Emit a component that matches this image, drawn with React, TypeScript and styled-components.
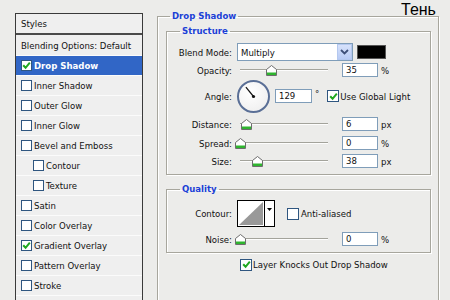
import React from 'react';
import styled, { createGlobalStyle } from 'styled-components';

const GlobalStyle = createGlobalStyle`
  html, body {
    margin: 0;
    padding: 0;
    width: 450px;
    height: 300px;
    overflow: hidden;
    background: #ececea;
    font-family: "DejaVu Sans Condensed", "Liberation Sans", sans-serif;
    font-size: 9.5px;
    color: #111;
  }
`;

const Page = styled.div`
  position: relative;
  display: flex;
  width: 450px;
  height: 300px;
  overflow: hidden;
`;

const Caption = styled.div`
  position: absolute;
  top: 1px;
  left: 401px;
  font-family: "Liberation Sans", Arial, sans-serif;
  font-size: 16px;
  line-height: 18px;
  color: #000;
`;

// ---- left list ----

const LeftPane = styled.div`
  padding: 13px 0 0 15px;
  flex: none;
`;

const StylesList = styled.div`
  width: 128px;
  height: 300px;
  box-sizing: border-box;
  border: 1px solid #3a3a3a;
  border-bottom: none;
  background: #efefef;
`;

const ListHeader = styled.div`
  height: 19px;
  display: flex;
  align-items: center;
  padding-left: 5px;
  border-bottom: 2px solid #4a4a4a;
`;

const ListItem = styled.div<{ $selected?: boolean; $indent?: boolean; $tall?: boolean }>`
  height: ${(p) => (p.$tall ? 20 : 19)}px;
  display: flex;
  align-items: center;
  gap: 2px;
  padding-left: ${(p) => (p.$indent ? 17 : 5)}px;
  border-bottom: 1px solid #fbfbfb;
  background: ${(p) => (p.$selected ? '#3166c6' : 'transparent')};
  color: ${(p) => (p.$selected ? '#fff' : '#111')};
  font-weight: ${(p) => (p.$selected ? 'bold' : 'normal')};
`;

const Box = styled.span<{ $size?: number }>`
  flex: none;
  display: inline-flex;
  align-items: center;
  justify-content: center;
  width: ${(p) => p.$size ?? 11}px;
  height: ${(p) => p.$size ?? 11}px;
  box-sizing: border-box;
  border: 1px solid #2f5680;
  background: #fff;
`;

const Check = ({ checked, size }: { checked?: boolean; size?: number }) => (
  <Box $size={size}>
    {checked && (
      <svg width="9" height="9" viewBox="0 0 9 9">
        <path d="M1.2 4.2 L3.6 6.8 L7.8 1.6" fill="none" stroke="#1fa81f" strokeWidth="2" />
      </svg>
    )}
  </Box>
);

// ---- right panel ----

const RightPane = styled.div`
  margin-left: 14px;
  padding-top: 10px;
  flex: none;
`;

const GroupBox = styled.fieldset<{ $pad?: string; $height?: number }>`
  margin: 0;
  min-width: 0;
  padding: ${(p) => p.$pad ?? '0'};
  border: 1px solid #a7a69d;
  box-shadow: 1px 1px 0 #fff, inset 1px 1px 0 #fff;
  ${(p) => (p.$height ? `height: ${p.$height}px;` : '')}
  box-sizing: border-box;
`;

const Legend = styled.legend<{ $offset: number }>`
  margin-left: ${(p) => p.$offset}px;
  padding: 0 2px;
  line-height: 12px;
  font-weight: bold;
  color: #1b3fd6;
  font-size: 9.5px;
`;

const Row = styled.div<{ $h: number; $mt: number }>`
  display: flex;
  align-items: center;
  gap: 5px;
  height: ${(p) => p.$h}px;
  margin-top: ${(p) => p.$mt}px;
`;

const Label = styled.span`
  width: 65px;
  flex: none;
  text-align: right;
  white-space: nowrap;
`;

const Select = styled.div`
  width: 116px;
  height: 18px;
  box-sizing: border-box;
  border: 1px solid #7f9db9;
  background: #fff;
  display: flex;
  align-items: center;
  justify-content: space-between;
  padding-left: 3px;
`;

const SelectButton = styled.span`
  width: 15px;
  height: 16px;
  box-sizing: border-box;
  border: 1px solid #b4c8ef;
  background: linear-gradient(#d7e2fb, #b8cbf5);
  display: flex;
  align-items: center;
  justify-content: center;
`;

const Swatch = styled.div`
  width: 27px;
  height: 12px;
  background: #000;
  border: 1px solid #555;
  margin-left: -1px;
`;

const SliderWrap = styled.div`
  position: relative;
  width: 100px;
  height: 16px;
  flex: none;
  display: flex;
  align-items: center;
`;

const Track = styled.div`
  margin-left: 3px;
  width: 88px;
  height: 0;
  border-top: 1px solid #a3a39b;
  border-bottom: 1px solid #fdfdfd;
`;

const ThumbHolder = styled.span`
  position: absolute;
  top: 3px;
  display: flex;
`;

const NumberInput = styled.div<{ $w?: number }>`
  width: ${(p) => p.$w ?? 36}px;
  height: 14px;
  box-sizing: border-box;
  border: 1px solid #7f9db9;
  background: #fff;
  padding-left: 3px;
  line-height: 12px;
  flex: none;
`;

const Unit = styled.span`
  margin-left: -2px;
`;

const Dial = styled.div`
  width: 33px;
  height: 33px;
  flex: none;
  border-radius: 50%;
  box-sizing: border-box;
  border: 2px solid #5a6f96;
  background: radial-gradient(circle at 40% 35%, #fff, #ececec);
  display: flex;
  align-items: center;
  justify-content: center;
`;

const Inline = styled.span<{ $gap?: number; $ml?: number }>`
  display: inline-flex;
  align-items: center;
  gap: ${(p) => p.$gap ?? 1}px;
  margin-left: ${(p) => p.$ml ?? 0}px;
  white-space: nowrap;
`;

const Degree = styled.span`
  margin-left: -2px;
  align-self: flex-start;
  margin-top: 9px;
`;

const Thumb = () => (
  <svg width="11" height="11" viewBox="0 0 11 11">
    <path d="M0.5 4.5 L5.5 0.5 L10.5 4.5 V10.5 H0.5 Z" fill="#fff" stroke="#6d6d6d" />
    <rect x="1" y="7.5" width="9" height="2.5" fill="#2fb52f" />
  </svg>
);

const Slider = ({ pct }: { pct: number }) => (
  <SliderWrap>
    <Track />
    <ThumbHolder style={{ left: 3 + (pct / 100) * 88 - 5.5 }}>
      <Thumb />
    </ThumbHolder>
  </SliderWrap>
);

const ContourPicker = () => (
  <svg width="38" height="27" viewBox="0 0 38 27">
    <rect x="0.5" y="0.5" width="37" height="26" fill="#fff" stroke="#000" />
    <path d="M2 25 L26 2 L26 25 Z" fill="#999" />
    <line x1="27.5" y1="1" x2="27.5" y2="26" stroke="#000" />
    <path d="M30 8 L35 8 L32.5 11 Z" fill="#000" />
  </svg>
);

const SliderRow = ({ label, pct, value, unit, mt }: { label: string; pct: number; value: string; unit: string; mt: number }) => (
  <Row $h={16} $mt={mt}>
    <Label>{label}</Label>
    <Slider pct={pct} />
    <NumberInput>{value}</NumberInput>
    <Unit>{unit}</Unit>
  </Row>
);

const effects: { name: string; checked?: boolean; selected?: boolean; indent?: boolean }[] = [
  { name: 'Drop Shadow', checked: true, selected: true },
  { name: 'Inner Shadow' },
  { name: 'Outer Glow' },
  { name: 'Inner Glow' },
  { name: 'Bevel and Emboss' },
  { name: 'Contour', indent: true },
  { name: 'Texture', indent: true },
  { name: 'Satin' },
  { name: 'Color Overlay' },
  { name: 'Gradient Overlay', checked: true },
  { name: 'Pattern Overlay' },
  { name: 'Stroke' },
];

export default function App() {
  return (
    <Page>
      <GlobalStyle />
      <Caption>Тень</Caption>
      <LeftPane>
        <StylesList>
          <ListHeader>Styles</ListHeader>
          <ListItem $tall>Blending Options: Default</ListItem>
          {effects.map((e) => (
            <ListItem key={e.name} $selected={e.selected} $indent={e.indent}>
              <Check checked={e.checked} />
              {e.name}
            </ListItem>
          ))}
        </StylesList>
      </LeftPane>
      <RightPane>
        <GroupBox $pad="3px 7px 0 8px" $height={320} style={{ width: 282 }}>
          <Legend $offset={4}>Drop Shadow</Legend>
          <GroupBox $pad="0 0 5px 0">
            <Legend $offset={13}>Structure</Legend>
            <Row $h={18} $mt={6}>
              <Label>Blend Mode:</Label>
              <Select>
                Multiply
                <SelectButton>
                  <svg width="9" height="6" viewBox="0 0 9 6">
                    <path d="M1 1 L4.5 4.5 L8 1" fill="none" stroke="#3d4f78" strokeWidth="1.8" />
                  </svg>
                </SelectButton>
              </Select>
              <Swatch />
            </Row>
            <SliderRow label="Opacity:" pct={36} value="35" unit="%" mt={1} />
            <Row $h={34} $mt={1}>
              <Label>Angle:</Label>
              <Dial>
                <svg width="29" height="29" viewBox="0 0 29 29">
                  <line x1="14.5" y1="14.5" x2="6.9" y2="5.2" stroke="#111" strokeWidth="1.2" />
                  <circle cx="14.5" cy="14.5" r="1.6" fill="#111" />
                </svg>
              </Dial>
              <NumberInput $w={37}>129</NumberInput>
              <Degree>°</Degree>
              <Inline $ml={3}>
                <Check checked size={12} />
                Use Global Light
              </Inline>
            </Row>
            <SliderRow label="Distance:" pct={7} value="6" unit="px" mt={3} />
            <SliderRow label="Spread:" pct={0} value="0" unit="%" mt={3} />
            <SliderRow label="Size:" pct={20} value="38" unit="px" mt={2} />
          </GroupBox>
          <GroupBox $pad="0 0 5px 0" style={{ marginTop: 8 }}>
            <Legend $offset={13}>Quality</Legend>
            <Row $h={27} $mt={5}>
              <Label>Contour:</Label>
              <ContourPicker />
              <Inline $ml={7} $gap={2}>
                <Check size={12} />
                Anti-aliased
              </Inline>
            </Row>
            <SliderRow label="Noise:" pct={0} value="0" unit="%" mt={4} />
          </GroupBox>
          <Row $h={13} $mt={5} style={{ paddingLeft: 74 }}>
            <Inline $gap={1}>
              <Check checked size={12} />
              Layer Knocks Out Drop Shadow
            </Inline>
          </Row>
        </GroupBox>
      </RightPane>
    </Page>
  );
}
